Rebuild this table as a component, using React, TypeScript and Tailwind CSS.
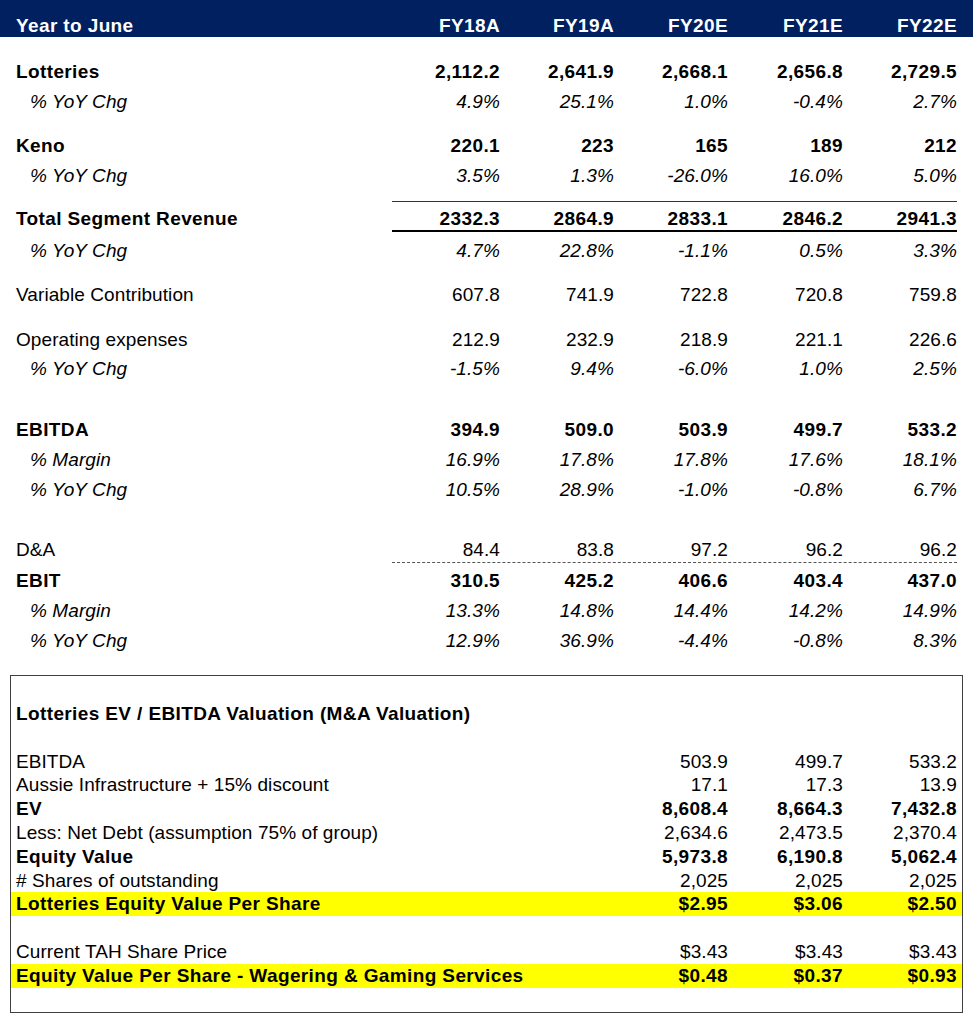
const cols = 'grid grid-cols-[386px_114px_114px_114px_115px_114px]';

type RowProps = {
  label: string;
  values: string[];
  h: string;
  bold?: boolean;
  italic?: boolean;
  indent?: boolean;
};

const Row = ({ label, values, h, bold, italic, indent }: RowProps) => (
  <div
    className={`${cols} ${h} items-end leading-[22px] ${bold ? 'font-bold tracking-[0.38px]' : 'tracking-[0.08px]'} ${italic ? 'italic' : ''}`}
  >
    <div className={indent ? 'pl-[30px]' : 'pl-[16px]'}>{label}</div>
    {values.map((v, i) => (
      <div key={i} className="text-right">{v}</div>
    ))}
  </div>
);

type BoxRowProps = {
  label?: string;
  values?: string[];
  bold?: boolean;
  yellow?: boolean;
};

const BoxRow = ({ label = '', values = [], bold, yellow }: BoxRowProps) => (
  <div
    className={`grid grid-cols-[603px_114px_115px_114px] h-[23.8px] leading-[23.8px] ${bold ? 'font-bold tracking-[0.38px]' : 'tracking-[0.08px]'} ${yellow ? 'bg-[#ffff00]' : ''}`}
  >
    <div className="pl-[5px] whitespace-nowrap">{label}</div>
    {values.map((v, i) => (
      <div key={i} className="text-right">{v}</div>
    ))}
  </div>
);

const App = () => {
  return (
    <div className="w-[973px] h-[1024px] bg-white text-black text-[19px] font-['Liberation_Sans',Arial,sans-serif]">
      {/* header */}
      <div className={`${cols} h-[37px] items-end leading-[22px] bg-[#002060] text-white font-bold tracking-[0.38px]`}>
        <div className="pl-[16px]">Year to June</div>
        <div className="text-right">FY18A</div>
        <div className="text-right">FY19A</div>
        <div className="text-right">FY20E</div>
        <div className="text-right">FY21E</div>
        <div className="text-right">FY22E</div>
      </div>

      <Row h="h-[46px]" bold label="Lotteries" values={['2,112.2', '2,641.9', '2,668.1', '2,656.8', '2,729.5']} />
      <Row h="h-[30px]" italic indent label="% YoY Chg" values={['4.9%', '25.1%', '1.0%', '-0.4%', '2.7%']} />
      <Row h="h-[44px]" bold label="Keno" values={['220.1', '223', '165', '189', '212']} />
      <Row h="h-[30px]" italic indent label="% YoY Chg" values={['3.5%', '1.3%', '-26.0%', '16.0%', '5.0%']} />

      <div className="mt-[14px] ml-[392px] w-[565px] h-px bg-[#333]" />
      <Row h="h-[28px]" bold label="Total Segment Revenue" values={['2332.3', '2864.9', '2833.1', '2846.2', '2941.3']} />
      <div className="ml-[392px] w-[565px] h-[2px] bg-black" />
      <Row h="h-[30px]" italic indent label="% YoY Chg" values={['4.7%', '22.8%', '-1.1%', '0.5%', '3.3%']} />

      <Row h="h-[44px]" label="Variable Contribution" values={['607.8', '741.9', '722.8', '720.8', '759.8']} />
      <Row h="h-[45px]" label="Operating expenses" values={['212.9', '232.9', '218.9', '221.1', '226.6']} />
      <Row h="h-[29px]" italic indent label="% YoY Chg" values={['-1.5%', '9.4%', '-6.0%', '1.0%', '2.5%']} />

      <Row h="h-[61px]" bold label="EBITDA" values={['394.9', '509.0', '503.9', '499.7', '533.2']} />
      <Row h="h-[30px]" italic indent label="% Margin" values={['16.9%', '17.8%', '17.8%', '17.6%', '18.1%']} />
      <Row h="h-[30px]" italic indent label="% YoY Chg" values={['10.5%', '28.9%', '-1.0%', '-0.8%', '6.7%']} />

      <Row h="h-[60px]" label="D&A" values={['84.4', '83.8', '97.2', '96.2', '96.2']} />
      <div className="mt-px ml-[392px] w-[565px] h-0 border-t border-dashed border-[#555]" />
      <Row h="h-[29px]" bold label="EBIT" values={['310.5', '425.2', '406.6', '403.4', '437.0']} />
      <Row h="h-[30px]" italic indent label="% Margin" values={['13.3%', '14.8%', '14.4%', '14.2%', '14.9%']} />
      <Row h="h-[30px]" italic indent label="% YoY Chg" values={['12.9%', '36.9%', '-4.4%', '-0.8%', '8.3%']} />

      {/* valuation box */}
      <div className="mt-[23px] ml-[10px] w-[953px] border border-[#404040] pt-[26px] pb-[24px]">
        <BoxRow bold label="Lotteries EV / EBITDA Valuation (M&A Valuation)" />
        <BoxRow />
        <BoxRow label="EBITDA" values={['503.9', '499.7', '533.2']} />
        <BoxRow label="Aussie Infrastructure + 15% discount" values={['17.1', '17.3', '13.9']} />
        <BoxRow bold label="EV" values={['8,608.4', '8,664.3', '7,432.8']} />
        <BoxRow label="Less: Net Debt (assumption 75% of group)" values={['2,634.6', '2,473.5', '2,370.4']} />
        <BoxRow bold label="Equity Value" values={['5,973.8', '6,190.8', '5,062.4']} />
        <BoxRow label="# Shares of outstanding" values={['2,025', '2,025', '2,025']} />
        <BoxRow bold yellow label="Lotteries Equity Value Per Share" values={['$2.95', '$3.06', '$2.50']} />
        <BoxRow />
        <BoxRow label="Current TAH Share Price" values={['$3.43', '$3.43', '$3.43']} />
        <BoxRow bold yellow label="Equity Value Per Share - Wagering & Gaming Services" values={['$0.48', '$0.37', '$0.93']} />
      </div>
    </div>
  );
};

export default App;
